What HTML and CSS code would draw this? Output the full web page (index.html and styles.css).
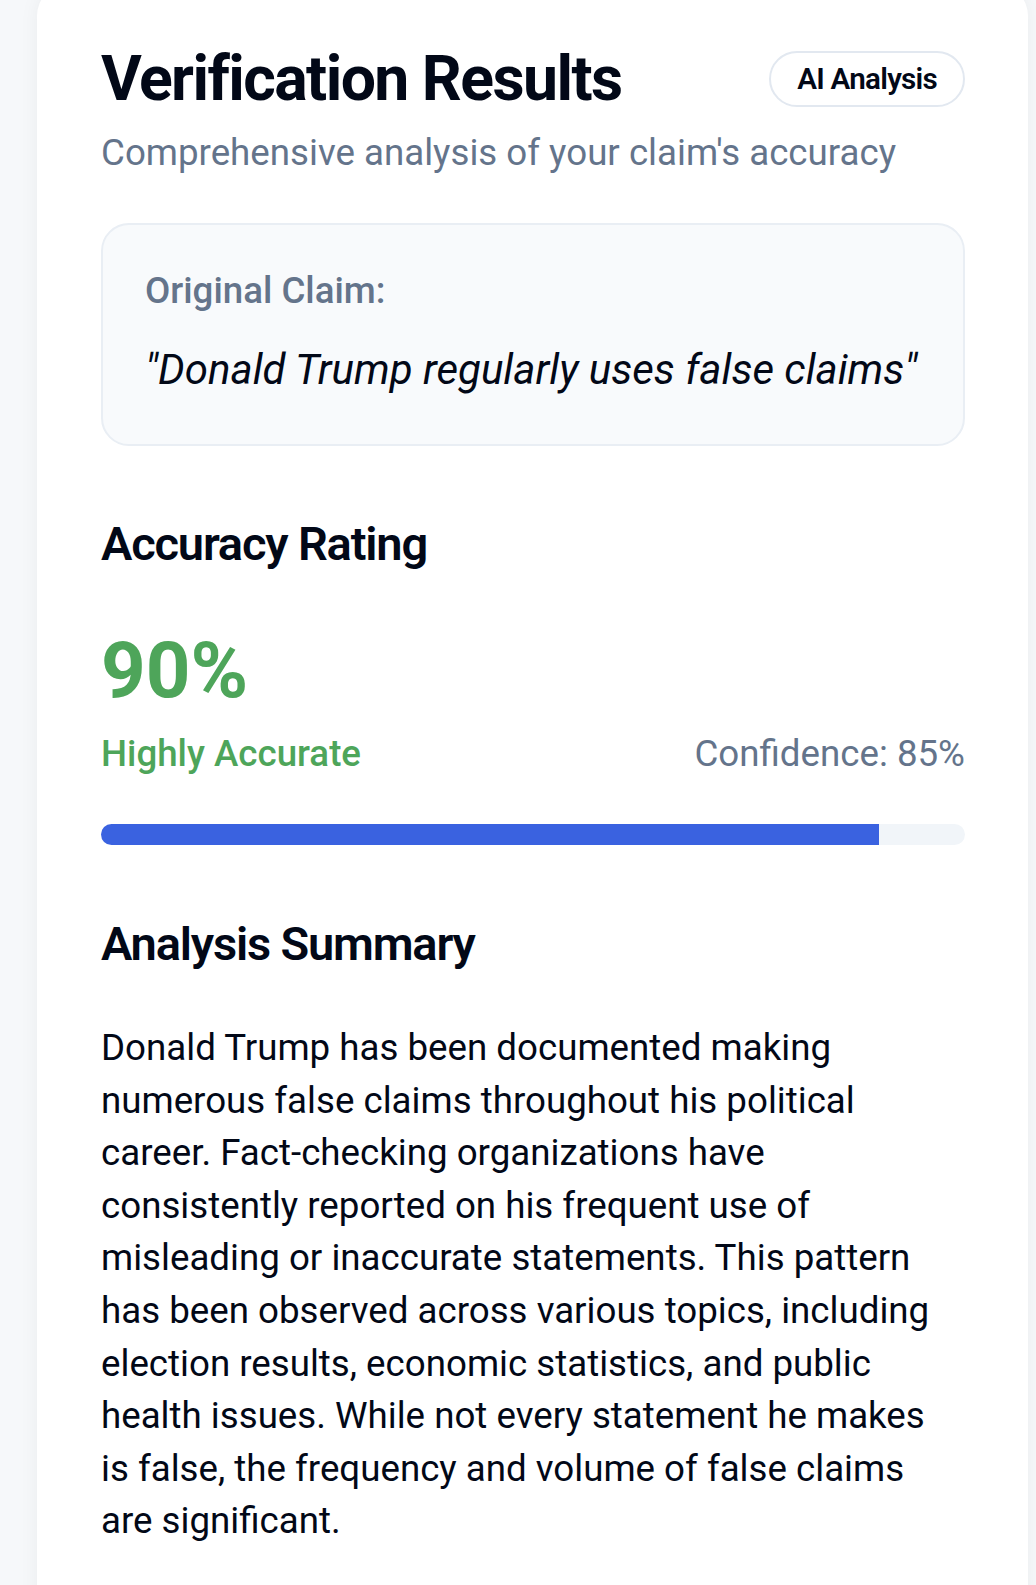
FILE: index.html
```html
<!DOCTYPE html>
<html lang="en">
<head>
<meta charset="utf-8">
<title>Verification Results</title>
<link rel="stylesheet" href="styles.css">
</head>
<body>
<main class="card">
  <header class="header">
    <h1 class="title">Verification Results</h1>
    <span class="badge">AI Analysis</span>
  </header>
  <p class="subtitle">Comprehensive analysis of your claim's accuracy</p>

  <section class="claim">
    <h3 class="claim-label">Original Claim:</h3>
    <p class="claim-text">"Donald Trump regularly uses false claims"</p>
  </section>

  <section class="rating">
    <h2 class="section-title">Accuracy Rating</h2>
    <div class="score">90%</div>
    <div class="score-row">
      <span class="verdict">Highly Accurate</span>
      <span class="confidence">Confidence: 85%</span>
    </div>
    <div class="track"><div class="fill" style="width: 90%"></div></div>
  </section>

  <section class="summary">
    <h2 class="section-title">Analysis Summary</h2>
    <p class="summary-text">Donald Trump has been documented making numerous false claims throughout his political career. Fact-checking organizations have consistently reported on his frequent use of misleading or inaccurate statements. This pattern has been observed across various topics, including election results, economic statistics, and public health issues. While not every statement he makes is false, the frequency and volume of false claims are significant.</p>
  </section>
</main>
</body>
</html>
```

FILE: styles.css
```css
* { box-sizing: border-box; }

html, body {
  margin: 0;
  padding: 0;
}

body {
  background: #f6f8fa;
  font-family: Roboto, "Noto Sans", Arial, sans-serif;
  color: #020817;
  height: 1585px;
  overflow: hidden;
}

.card {
  margin: -16px 0 0 37px;
  width: 991px;
  min-height: 1700px;
  background: #ffffff;
  border-radius: 32px;
  box-shadow: 0 0 20px rgba(15, 23, 42, 0.05);
  padding: 57px 63px 0 64px;
}

.header {
  display: flex;
  justify-content: space-between;
  align-items: flex-start;
}

.title {
  margin: 0;
  font-size: 62.5px;
  line-height: 76px;
  font-weight: 700;
  letter-spacing: -0.025em;
  color: #020817;
}

.badge {
  margin-top: 10px;
  height: 56px;
  display: inline-flex;
  align-items: center;
  padding: 0 26px;
  border: 2px solid #e2e8f0;
  border-radius: 999px;
  font-size: 29.6px;
  font-weight: 600;
  letter-spacing: -0.025em;
  color: #020817;
}

.subtitle {
  margin: 12px 0 0;
  font-size: 36.7px;
  line-height: 48px;
  color: #64748b;
}

.claim {
  margin-top: 46px;
  background: #f8fafc;
  border: 2px solid #e9eef4;
  border-radius: 28px;
  padding: 42px 42px 46px;
}

.claim-label {
  margin: 0;
  font-size: 36.7px;
  line-height: 48px;
  font-weight: 500;
  color: #64748b;
}

.claim-text {
  margin: 27px 0 0;
  font-size: 42px;
  line-height: 56px;
  font-style: italic;
  color: #020817;
}

.rating {
  margin-top: 68px;
}

.section-title {
  margin: 0;
  font-size: 47px;
  line-height: 60px;
  font-weight: 600;
  letter-spacing: -0.025em;
  color: #020817;
}

.score {
  margin-top: 58px;
  font-size: 78px;
  line-height: 78px;
  font-weight: 700;
  color: #4ea55a;
}

.score-row {
  margin-top: 20px;
  display: flex;
  justify-content: space-between;
  align-items: baseline;
  font-size: 36.7px;
  line-height: 48px;
}

.verdict {
  font-weight: 500;
  color: #4ea55a;
}

.confidence {
  color: #64748b;
}

.track {
  margin-top: 46px;
  height: 21px;
  background: #f1f5f9;
  border-radius: 999px;
  overflow: hidden;
}

.fill {
  height: 100%;
  background: #3a62e0;
}

.summary {
  margin-top: 69px;
}

.summary-text {
  margin: 48px 20px 0 0;
  font-size: 36.7px;
  line-height: 52.6px;
  color: #020817;
}
```
